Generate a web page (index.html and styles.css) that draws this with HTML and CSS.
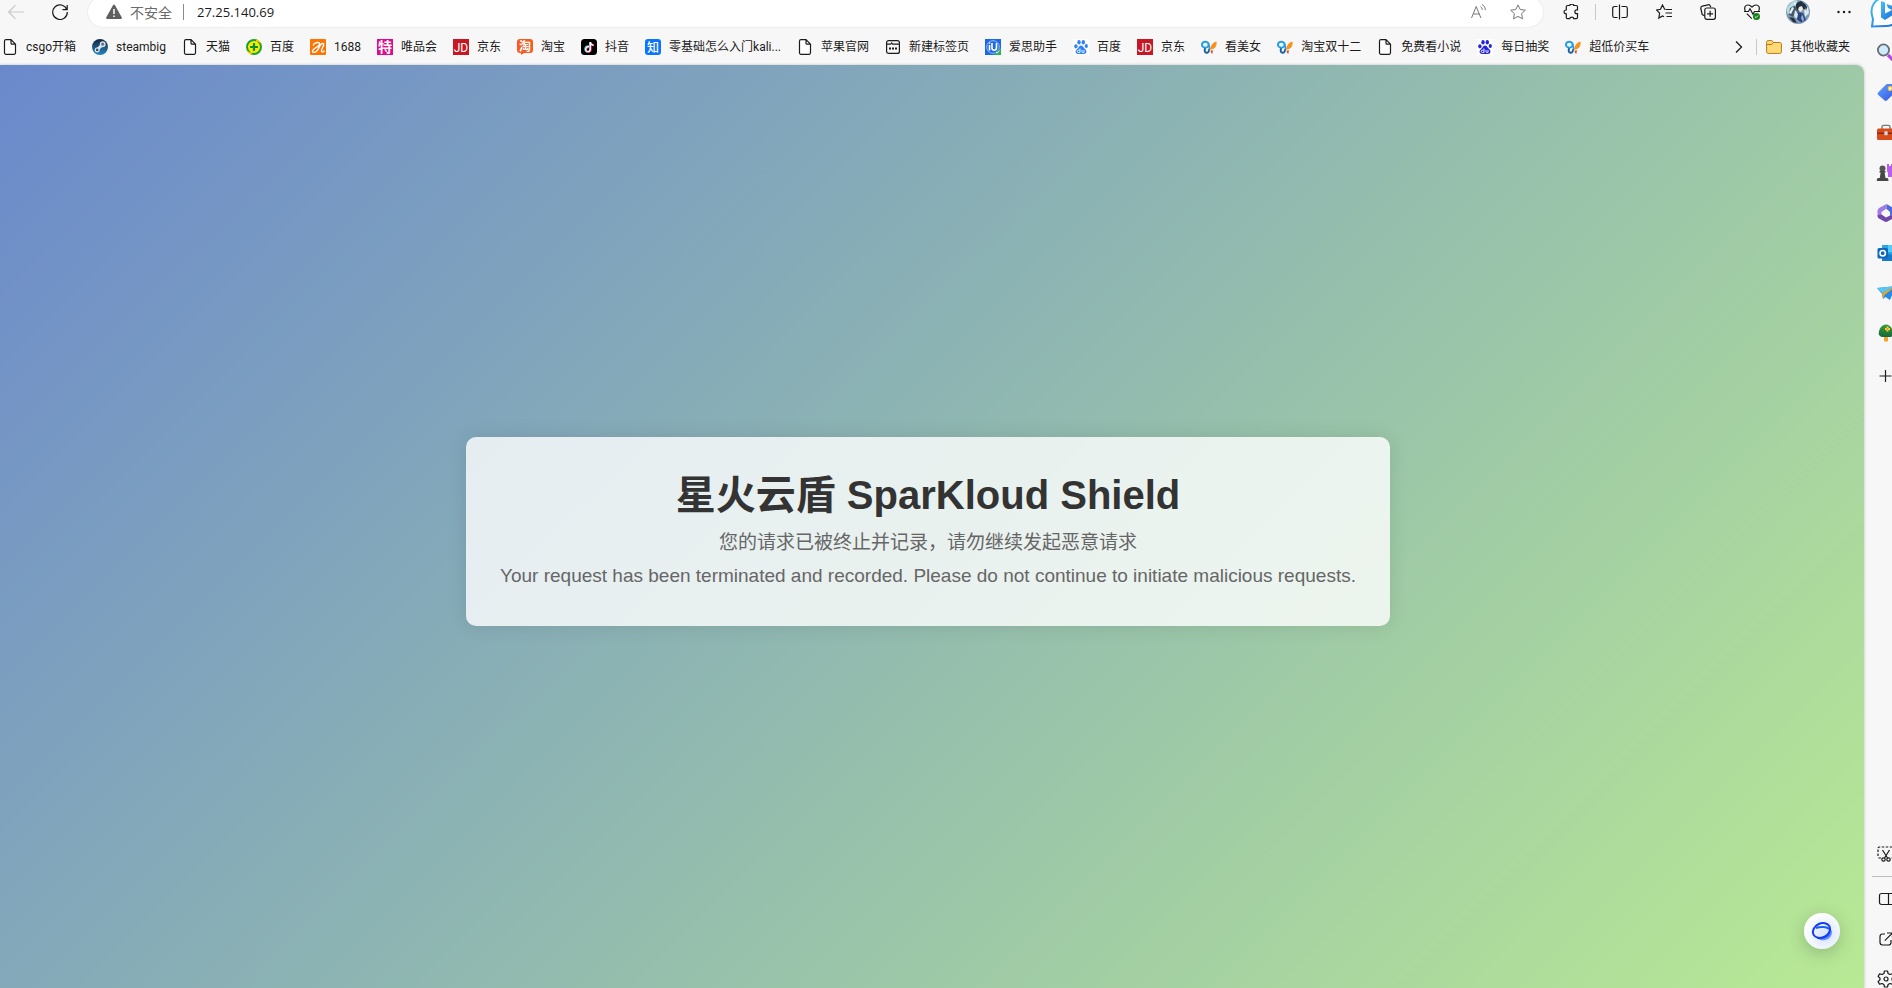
FILE: index.html
```html
<!DOCTYPE html>
<html lang="zh-CN">
<head>
<meta charset="utf-8">
<title>星火云盾 SparKloud Shield</title>
<link rel="stylesheet" href="styles.css">
</head>
<body>
<svg class="defs" aria-hidden="true">
  <defs>
    <linearGradient id="steam" x1="0" y1="0" x2="0" y2="1"><stop offset="0" stop-color="#152440"/><stop offset="1" stop-color="#2487bd"/></linearGradient>
    <linearGradient id="bing" x1="0" y1="0" x2="1" y2="1"><stop offset="0" stop-color="#45c4f3"/><stop offset="1" stop-color="#1862d8"/></linearGradient>
    <linearGradient id="tag" x1="0" y1="0" x2="1" y2="1"><stop offset="0" stop-color="#62a4ff"/><stop offset="1" stop-color="#3453e0"/></linearGradient>
    <linearGradient id="tree" x1="0" y1="0" x2="0" y2="1"><stop offset="0" stop-color="#3c9a3e"/><stop offset="1" stop-color="#126b37"/></linearGradient>
    <radialGradient id="orb" cx="0.6" cy="0.6" r="0.6"><stop offset="0" stop-color="#d5e2ff"/><stop offset="1" stop-color="#ffffff"/></radialGradient>
    <symbol id="page" viewBox="0 0 16 16"><path d="M4 .7h5l4.500 4.500v8.600a1.500 1.500 0 0 1-1.500 1.500H4a1.500 1.500 0 0 1-1.500-1.500V2.200A1.500 1.500 0 0 1 4 .7ZM9 .7v3.500a1 1 0 0 0 1 1h3.500" fill="#fff" stroke="#1b1b1b" stroke-width="1.200"/></symbol>
    <symbol id="jd" viewBox="0 0 16 16"><path d="M0 0h16v16H0z" fill="#c81623"/><text x="8" y="12.500" text-anchor="middle" font-size="12" fill="#fff">JD</text></symbol>
    <symbol id="paw" viewBox="0 0 16 16"><path d="M0 0h16v16H0z" fill="#fff"/><ellipse cx="2.900" cy="7.300" rx="1.700" ry="2.100"/><ellipse cx="6" cy="3.300" rx="1.700" ry="2.300"/><ellipse cx="10.300" cy="3.300" rx="1.700" ry="2.300"/><ellipse cx="13.300" cy="7" rx="1.600" ry="2"/><path d="M8 6.500c1.800 0 2.300 1.700 3.500 2.900 1.600 1.500 2.400 2.600 1.800 4.200-.7 1.800-2.500 1.500-5.300 1.500s-4.700.2-5.300-1.600c-.5-1.700.6-2.600 2-4C5.900 8.300 6.300 6.500 8 6.500Z"/><path d="M7 9.500v4H5.500c-1.700 0-1.700-2.300 0-2.300H7M9 11v1.700c0 .8.600.8 2 .8V11" fill="none" stroke="#fff" stroke-width=".9"/></symbol>
    <symbol id="fly" viewBox="0 0 16 16"><ellipse cx="4.300" cy="5.700" rx="3.400" ry="3" fill="#e9f7ff" stroke="#2c9fdf" stroke-width="2"/><path d="M7.500 5c.8 1.800 1 4 .8 6" fill="none" stroke="#239bdd" stroke-width="1.600"/><path d="M4.500 9.300c-1.600 1.500-.8 4.300.9 4.500 1.700.1 2.500-1.200 2.600-3.300" fill="none" stroke="#165f9d" stroke-width="1.900"/><path d="M9 11c.1-4 3-7.800 6.300-8.600.9 3-.1 6-2.700 7.400-1.300.6-2.500.5-3.600 1.200Z" fill="#f7931d"/><path d="m9.700 11.500 2.300-.2-.6 3.500c-1.600-.8-1.900-1.500-1.700-3.300Z" fill="#e44e37"/></symbol>
  </defs>
</svg>
<div class="browser">
  <div class="window">
    <header class="toolbar">
      <button class="tool faded" aria-label="返回"><svg viewBox="0 0 16 16"><path d="M16 8H.7M7.500 1.200.7 8l6.800 6.800"/></svg></button>
      <button class="tool" aria-label="刷新"><svg viewBox="0 0 16 16"><path d="M14.800 5.500A7.300 7.300 0 1 0 15.300 8M15.200 1v4.700h-4.700"/></svg></button>
      <form class="address">
        <button class="security" type="button"><svg viewBox="0 0 16 16"><path d="M7 1.200a1.200 1.200 0 0 1 2 0l6.700 12a1.200 1.200 0 0 1-1 1.800H1.300a1.200 1.200 0 0 1-1-1.800Z" fill="#5f5f5f"/><path d="M8 5v5M8 11.500v1.500" stroke="#fff" stroke-width="1.500"/></svg>不安全</button>
        <input class="url" type="text" aria-label="地址" value="27.25.140.69">
        <button class="inner" type="button" aria-label="朗读此页内容"><svg viewBox="0 0 16 16"><path d="m1.500 14 4.700-11.500L10.900 14M3.200 10h6M10.500 2.500c1.100.8 1.600 1.800 1.700 3.300M12 .5c2.200 1.100 3.300 3 3.400 5.600"/></svg></button>
        <button class="inner" type="button" aria-label="收藏"><svg viewBox="0 0 16 16"><path d="m8 .9 2.200 4.600 5.100.7-3.700 3.500.9 5.100L8 12.400l-4.500 2.400.9-5.100L.7 6.200l5.100-.7Z"/></svg></button>
      </form>
      <button class="tool" aria-label="扩展"><svg viewBox="0 0 16 16"><path d="M4.500 1.500h2.300C6.800-.3 10.700-.3 10.700 1.500h2.600c.7 0 1.200.5 1.200 1.200v3.100h-.7c-2.600 0-2.600 3.900 0 3.900h.7v3.800c0 .7-.5 1.200-1.200 1.200h-2.600c0-2-3.900-2-3.900 0H4.500c-.7 0-1.200-.5-1.200-1.200V9.900C.3 9.900.3 6 3.300 6V2.700c0-.7.500-1.200 1.200-1.200Z"/></svg></button>
      <span class="rule"></span>
      <button class="tool" aria-label="分屏"><svg viewBox="0 0 16 16"><path d="M5.500 2.500h-3C1.400 2.500.7 3.200.7 4.300v7.400c0 1.100.7 1.800 1.800 1.800h3M9.500 2.500h4c1.100 0 1.800.7 1.800 1.800v7.400c0 1.100-.7 1.800-1.800 1.800h-4M7.500 .5v15"/></svg></button>
      <button class="tool" aria-label="收藏夹"><svg viewBox="0 0 16 16"><path d="M9 5.500 8.500 5 6.500 1 4.500 5.300.6 6l3 3.100-.8 5 3.700-2.200 1.500.8M9.500 5.500H16M9.500 9H16M10.500 12.500H16"/></svg></button>
      <button class="tool" aria-label="集锦"><svg viewBox="0 0 16 16"><path d="M4.500 11.800 2.200 10.500 .8 4.500C.5 3 1 2.500 2.300 2.100L8 .8c1.300-.3 2 .1 2.400 1.500l.3.900"/><rect x="4.800" y="4" width="10.600" height="11.300" rx="2"/><path d="M10.100 6.800v6M7.100 9.800h6"/></svg></button>
      <button class="tool" aria-label="浏览器概要"><svg viewBox="0 0 16 16"><path d="M1.300 7C-.3 3 1.500 1 4 1c1.900 0 3 1 4 2 1-1 2.100-2 4-2 2.500 0 4.300 2 2.700 6M2.800 9.600l5 5M0 7.500h4.500L6 4.800l3 5.400 1.500-2.700H16"/><circle cx="12.500" cy="12.500" r="3.500" fill="#128218" stroke="none"/><path d="m10.900 12.600 1.100 1.100 2.100-2.200" stroke="#fff" stroke-width=".9"/></svg></button>
      <button class="tool profile" aria-label="个人资料"><svg class="avatar" viewBox="0 0 24 24"><circle cx="12" cy="12" r="12" fill="#7d9bb2"/><path d="M1.500 7 6 2l5-2 1 4-5 6-5 4-1.500-3Z" fill="#b9dce4"/><path d="m10 3 5-2 5 4-1 5-3-2-4 4-2-4Z" fill="#22303f"/><path d="m4 8 5-3 2 5-4 7-4-2Z" fill="#46596b"/><path d="m6 7 2 1-3 6-2-1ZM9 2l2 1-4 4Z" fill="#e6f3f6"/><path d="m13 7 3-1 1 3-2 3-3-2Z" fill="#f0e5df"/><path d="m11 12 6 1 3 7-5 2.500-5-4Z" fill="#2c4482"/><path d="m9 10 3 4-1 5-3-3ZM18 10l4-3 1 6-4 4Z" fill="#dce9f0"/><path d="m3 17 5 1 3 5-4-1ZM14 15l2 4 1-4ZM19 5l2 2-1 4Z" fill="#26323f"/><path d="m16 14 2 5-1 3-2-4Z" fill="#8fb5d8"/></svg></button>
      <button class="tool" aria-label="设置及其他"><svg viewBox="0 0 16 16"><g fill="#1b1b1b" stroke="none"><circle cx="2.500" cy="8" r="1.200"/><circle cx="8" cy="8" r="1.200"/><circle cx="13.500" cy="8" r="1.200"/></g></svg></button>
    </header>
    <nav class="bookmarks" aria-label="收藏夹栏">
      <a href="#"><svg><use href="#page"/></svg>csgo开箱</a>
      <a href="#"><svg viewBox="0 0 16 16"><circle cx="8" cy="8" r="8" fill="url(#steam)"/><path d="m5.500 10.500 5-5" stroke="#dfe6ee" stroke-width="3"/><circle cx="10.700" cy="5.200" r="2.300" fill="#607896" stroke="#dfe6ee" stroke-width="1.300"/><circle cx="5.200" cy="10.900" r="1.900" fill="#315575" stroke="#dfe6ee" stroke-width="1.200"/></svg>steambig</a>
      <a href="#"><svg><use href="#page"/></svg>天猫</a>
      <a href="#"><svg viewBox="0 0 16 16"><circle cx="8" cy="8" r="7" fill="#ffe900" stroke="#12a23b" stroke-width="2"/><path d="M0 7c0 5 3 7 7 6l-2 2.500C2 14.500 0 11.500 0 8ZM16 9c0-5-3-7-7-6l2-2.500c3 1 5 4 5 7.500Z" fill="#ffd500"/><path d="M8 4v8M4 8h8" stroke="#0a9136" stroke-width="2.200"/></svg>百度</a>
      <a href="#"><svg viewBox="0 0 16 16"><rect width="16" height="16" rx="1" fill="#ff7300"/><path d="M3 6.500C4.500 3 10.500 2.500 9.500 5.500 8.500 8.500 3 9 2.500 12c-.3 2.500 4 1.500 5.500-1.500C9.500 7.500 10.500 4 13 4.500c2.500.8-2.500 6-1.500 8 .6 1 2.300.2 3-.7" fill="none" stroke="#fff" stroke-width="1.400"/></svg>1688</a>
      <a href="#"><svg class="label" viewBox="0 0 16 16"><path d="M0 0h16v16H0z" fill="#df0b8e"/><text x="8" y="13" text-anchor="middle" font-size="14" font-weight="700" fill="#fff">特</text></svg>唯品会</a>
      <a href="#"><svg><use href="#jd"/></svg>京东</a>
      <a href="#"><svg class="label" viewBox="0 0 16 16"><path d="M3 0h10a3 3 0 0 1 3 3v8a3 3 0 0 1-3 3H7l-3 2v-2H3a3 3 0 0 1-3-3V3a3 3 0 0 1 3-3Z" fill="#f65b20"/><text x="8" y="11.500" text-anchor="middle" font-size="12" font-weight="700" fill="#fff">淘</text></svg>淘宝</a>
      <a href="#"><svg viewBox="0 0 16 16"><rect width="16" height="16" rx="3.500"/><g fill="none" stroke-width="1.800"><path d="M7.700 7.200c-4.500-.4-4.600 5.700-1 5.700 1.400 0 2.200-1 2.200-2.400V3" stroke="#20dad6"/><path d="M8.300 8c-4-.2-4 5-.9 5 1.400 0 2.400-1 2.400-2.400V3.200c.2 2 1.400 3.100 3.200 3.300" stroke="#f7265a"/><path d="M8 7.600c-4-.4-4.300 4.900-1.200 5 1.400 0 2.500-1 2.500-2.400V3c.2 2 1.400 3 3.200 3.200" stroke="#fff" stroke-width="1.300"/></g></svg>抖音</a>
      <a href="#"><svg class="label" viewBox="0 0 16 16"><rect width="16" height="16" rx="3" fill="#0874ff"/><text x="8" y="12.500" text-anchor="middle" font-size="12" font-weight="500" fill="#fff">知</text></svg>零基础怎么入门kali...</a>
      <a href="#"><svg><use href="#page"/></svg>苹果官网</a>
      <a href="#"><svg viewBox="0 0 16 16"><g fill="none" stroke="#1b1b1b" stroke-width="1.200"><rect x="1.600" y="1.600" width="12.800" height="12.800" rx="2"/><path d="M1.600 5.200h4L7.200 3.500M7 5.200h7"/><path d="M4 9.500h2M7 9.500h2M10 9.500h2" stroke-width="1.800"/></g></svg>新建标签页</a>
      <a href="#"><svg viewBox="0 0 16 16"><path d="M0 0h16v16H0z" fill="#1f68e5"/><circle cx="8" cy="8" r="6.300" fill="none" stroke="#b6d0ff" stroke-width=".8"/><path d="M4.500 6v5.500M4.500 3.500v1.200M7 4v5c0 3 4.500 3 4.500 0V4" fill="none" stroke="#fff" stroke-width="1.600"/><path d="M16 9v7H8.500Z" fill="#2fac61"/><path d="m11 13 1 1.200 2.500-2.600" fill="none" stroke="#d5ffe3"/></svg>爱思助手</a>
      <a href="#"><svg class="paw-light"><use href="#paw"/></svg>百度</a>
      <a href="#"><svg><use href="#jd"/></svg>京东</a>
      <a href="#"><svg><use href="#fly"/></svg>看美女</a>
      <a href="#"><svg><use href="#fly"/></svg>淘宝双十二</a>
      <a href="#"><svg><use href="#page"/></svg>免费看小说</a>
      <a href="#"><svg class="paw-dark"><use href="#paw"/></svg>每日抽奖</a>
      <a href="#"><svg><use href="#fly"/></svg>超低价买车</a>
      <button class="more" aria-label="更多收藏"><svg viewBox="0 0 16 16"><path d="m6 2.500 5.500 5.500L6 13.500" fill="none" stroke="#1b1b1b" stroke-width="1.300"/></svg></button>
      <span class="rule"></span>
      <a href="#"><svg viewBox="0 0 16 16"><path d="M.6 4.500V3.200c0-1 .6-1.600 1.600-1.600h3.600l2 1.900h6c1 0 1.600.6 1.600 1.500v7.800c0 1-.6 1.600-1.600 1.600H2.200c-1 0-1.600-.6-1.600-1.600Z" fill="#ffd978" stroke="#b27b12"/><path d="M.6 5.500h5L7.800 3.500" fill="none" stroke="#b27b12"/></svg>其他收藏夹</a>
    </nav>
    <main class="content">
      <section class="card">
        <h1>星火云盾 SparKloud Shield</h1>
        <p>您的请求已被终止并记录，请勿继续发起恶意请求</p>
        <p>Your request has been terminated and recorded. Please do not continue to initiate malicious requests.</p>
      </section>
      <button class="assistant" aria-label="助手"><svg viewBox="0 0 36 36"><circle cx="18" cy="18" r="18" fill="url(#orb)"/><g fill="none" stroke-width="2"><path d="M12 15c5-1.800 11.500-1 13.500 1.200 2.300 3-.3 7.300-4.700 8.500-3.500 1-5.800.7-7.600-.1" stroke="#1b5cff"/><path d="M26.800 18c.8 4-1.800 7.300-5.800 8-2 .4-4 .3-5.500-.1" stroke="#5f8dff"/><ellipse cx="17.500" cy="17.500" rx="9" ry="7" transform="rotate(-27 17.500 17.500)" stroke="#143cf5"/></g></svg></button>
    </main>
  </div>
  <aside class="sidebar" aria-label="边栏">
    <button class="bing" aria-label="必应"><svg viewBox="0 0 32 32"><path d="M2 30.500 3 23C-1.500 11 5 1.500 16 1.500S31 9 31 16 25 30 16 30Z" fill="#fff" stroke="url(#bing)" stroke-width="2"/><path d="m11 5 4 1.500v11l7-3.500-4-2-1.500-4L26 11v6l-11 7-4-2.500Z" fill="url(#bing)"/></svg></button>
    <button aria-label="搜索"><svg viewBox="0 0 20 20"><path d="m12 12 6 6" stroke="#b643eb" stroke-width="3.200"/><circle cx="7.500" cy="7" r="5.600" fill="#cfeafa" stroke="#686d75" stroke-width="1.800"/></svg></button>
    <button aria-label="购物"><svg viewBox="0 0 20 20"><path d="m2.300 9.300 7-7c1-1 1.500-1.200 2.700-1.200h5.500c1 0 1.500.5 1.500 1.500V8c0 1.200-.3 1.700-1.200 2.600l-6.500 6.500c-1.200 1.200-2 1.200-3.200 0l-5.800-5c-.9-.8-.9-1.900 0-2.800Z" fill="url(#tag)"/><circle cx="14.200" cy="5.500" r="1.900" fill="#fff" stroke="#ffc629" stroke-width="1.200"/></svg></button>
    <button aria-label="工具"><svg viewBox="0 0 20 20"><path d="M6 6V4c0-1 .6-1.600 1.600-1.600h4.800c1 0 1.600.6 1.600 1.600v2" fill="none" stroke="#77777c" stroke-width="1.400"/><rect x="1" y="5.500" width="18" height="11.500" rx="1.500" fill="#d84b1a"/><path d="M1 9.500h18v1.500H1z" fill="#8d2b12"/><rect x="8.300" y="8.300" width="3.400" height="4" rx=".8" fill="#d4d8df"/></svg></button>
    <button aria-label="游戏"><svg viewBox="0 0 20 20"><path d="M11 1h2v2h2V1h2v2h3v5l-1.500 2v4H12v-4l-1-2Z" fill="#b95df2"/><circle cx="6.500" cy="5.500" r="3" fill="#555"/><path d="M3.500 8h6v1.600H8.600l.9 5.400h1.700c.8 0 1.300 1.300 1.300 3H.8c0-1.700.5-3 1.400-3h1.600l.8-5.400H3.500Z" fill="#484848"/></svg></button>
    <button aria-label="Microsoft 365"><svg viewBox="0 0 20 20"><path d="M10.500 1 4 4.500C2.400 5.400 1.500 6.500 1.500 8v5l4 2V9l5-3Z" fill="#a17be4"/><path d="m10.500 1 7 4c1 .6 1.500 1.500 1.500 2.500v5l-5 .5V9l-3.500-3Z" fill="#496bdd"/><path d="m1.500 12.500 4-1 4.500 3 4-2 5 .5-1.500 2-6 3.600c-1 .6-2 .6-3 0L3 15.500c-1-.6-1.500-1.500-1.500-3Z" fill="#7045ae"/><path d="M7 8.200 10 6l3 2.200v3.300L10 13.500l-3-2Z" fill="#f7f7f7"/></svg></button>
    <button aria-label="Outlook"><svg viewBox="0 0 20 20"><path d="M6 2h12a2 2 0 0 1 2 2v12a2 2 0 0 1-2 2H6Z" fill="#2aa6e8"/><path d="M12 2h8v7h-8Z" fill="#55c9f8"/><path d="m6 9 14 4v5H6Z" fill="#1679cc"/><rect x="1.500" y="5" width="10.500" height="10.500" rx="1.500" fill="#0f67b8"/><circle cx="6.700" cy="10.200" r="2.700" fill="none" stroke="#fff" stroke-width="1.600"/></svg></button>
    <button aria-label="Drop"><svg viewBox="0 0 20 20"><path d="M1 5 20 3l-6 14-4.500-3L7 16l-1-5Z" fill="#2489e8"/><path d="m1 5 19-2L6 10Z" fill="#54c7f5"/><path d="m6 10 14-7L8.500 12 7 16Z" fill="#e8a52b"/></svg></button>
    <button aria-label="植树"><svg viewBox="0 0 20 20"><path d="M8 13h4v4.500c0 .8-.5 1-1 1H9c-.5 0-1-.2-1-1Z" fill="#f5a326"/><path d="M10 1.500c4 0 6.800 4 7.300 8.500.2 2.500-1.800 4-3.800 4h-7c-2 0-4-1.500-3.800-4C3.200 5.500 6 1.500 10 1.500Z" fill="url(#tree)"/><path d="M11.500 3.500v5M9 6h5" stroke="#ffd43b" stroke-width="2"/><circle cx="11.500" cy="6" r="1" fill="#ef871d"/></svg></button>
    <button class="line" aria-label="添加"><svg viewBox="0 0 20 20"><path d="M9.500 4v12M3.500 10h12"/></svg></button>
    <div class="bottom">
      <button class="line" aria-label="截图"><svg viewBox="0 0 20 20"><path d="M5 14H3.500C2.600 14 2 13.400 2 12.500V4.500C2 3.600 2.600 3 3.500 3h13c.9 0 1.500.6 1.500 1.500v8c0 .9-.6 1.500-1.500 1.500H15" stroke-dasharray="2.500 1.500"/><path d="m6.500 6 5 8M13.500 6l-5 8"/><circle cx="7.500" cy="15.500" r="1.700"/><circle cx="12.500" cy="15.500" r="1.700"/></svg></button>
      <hr>
      <button class="line" aria-label="侧栏"><svg viewBox="0 0 20 20"><rect x="3.500" y="4.500" width="15" height="11" rx="2"/><path d="M12.500 4.500v11"/></svg></button>
      <button class="line" aria-label="外部打开"><svg viewBox="0 0 20 20"><path d="M9 5H6.500C5 5 4 6 4 7.500v5.800C4 15 5 16 6.500 16h6c1.500 0 2.500-1 2.500-2.500V11M11 4h5.500v5.500M16.300 4.200l-7.500 7.500"/></svg></button>
      <button class="line" aria-label="设置"><svg viewBox="0 0 20 20"><circle cx="10" cy="10" r="2"/><path d="M8.500 2h3l.6 2.500 1.800 1 2.500-.7 1.500 2.600L16 9.200v1.600l1.900 1.800-1.500 2.600-2.500-.7-1.800 1-.6 2.500h-3l-.6-2.500-1.800-1-2.500.7-1.500-2.600L4 10.800V9.200L2.100 7.400l1.500-2.600 2.500.7 1.800-1Z" stroke-linejoin="round"/></svg></button>
    </div>
  </aside>
</div>
</body>
</html>
```
FILE: styles.css
```css
* { box-sizing: border-box; }

body {
  margin: 0;
  background: #f7f7f7;
  color: #1b1b1b;
  font-family: "Noto Sans CJK SC", "Noto Sans", sans-serif;
  font-size: 12px;
}

button {
  border: 0;
  padding: 0;
  background: none;
  font: inherit;
  color: inherit;
}

svg { display: block; flex: none; }

.defs { position: absolute; width: 0; height: 0; }

.browser {
  display: grid;
  grid-template-columns: minmax(0, 1fr) 28px;
  height: 100vh;
  overflow: hidden;
}

.window { display: flex; flex-direction: column; min-width: 0; }

/* Toolbar */
.toolbar {
  display: flex;
  align-items: center;
  gap: 12px;
  height: 32px;
  margin-top: -4px;
  padding-right: 4px;
}

.tool {
  display: flex;
  justify-content: center;
  flex: none;
  width: 32px;
}

.tool svg,
.inner svg {
  width: 16px;
  height: 16px;
  fill: none;
  stroke: #1b1b1b;
  stroke-width: 1.2;
}

.faded svg { stroke: #c9c9c9; }
.profile { width: 36px; }
.tool .avatar { width: 24px; height: 24px; stroke: none; }

.rule { flex: none; width: 1px; height: 16px; margin: 0 -4px; background: #c8c8c8; }

.address {
  display: flex;
  align-items: center;
  flex: 1;
  gap: 24px;
  min-width: 0;
  height: 30px;
  padding: 0 17px 0 18px;
  border-radius: 16px;
  background: #fff;
  box-shadow: 0 0 2px rgba(0, 0, 0, 0.12);
}

.security {
  display: flex;
  align-items: center;
  gap: 8px;
  padding-right: 11px;
  font-size: 14px;
  line-height: 16px;
  color: #6b6b6b;
}

.security svg { width: 16px; height: 16px; }

.url {
  flex: 1;
  min-width: 0;
  height: 16px;
  margin-left: -24px;
  padding: 0 0 0 13px;
  border: 0;
  border-left: 1px solid #8c8c8c;
  outline: 0;
  font-family: "Open Sans", "Noto Sans", sans-serif;
  font-size: 13px;
  color: #1b1b1b;
}

.inner svg { stroke: #767676; stroke-width: 1; }

/* Bookmarks */
.bookmarks {
  display: flex;
  align-items: center;
  gap: 16px;
  height: 37px;
  padding: 0 14px 0 2px;
  font-family: Roboto, "Noto Sans CJK SC", sans-serif;
  white-space: nowrap;
}

.bookmarks a {
  display: flex;
  align-items: center;
  gap: 8px;
  line-height: 18px;
  color: #1b1b1b;
  text-decoration: none;
}

.bookmarks svg { width: 16px; height: 16px; }
.bookmarks .label { overflow: visible; }
.paw-light { fill: #2f83f5; }
.paw-dark { fill: #2424dc; }
.more { margin-left: auto; }
.bookmarks .rule { margin: 0 -7px 0 -6px; }

/* Page */
.content {
  position: relative;
  display: flex;
  align-items: center;
  justify-content: center;
  flex: 1;
  padding: 10px 8px 0 0;
  border-top-right-radius: 8px;
  background: linear-gradient(135deg, #6a89cc, #b8e994);
  box-shadow: 0 0 3px rgba(0, 0, 0, 0.25);
  font-family: "Liberation Sans", "Noto Sans CJK SC", sans-serif;
}

.card {
  padding: 30px 34px 34px;
  border-radius: 10px;
  background: rgba(255, 255, 255, 0.8);
  box-shadow: 0 0 20px rgba(0, 0, 0, 0.1);
  text-align: center;
}

.card h1 {
  margin: 0 0 3px;
  font-size: 40px;
  line-height: 56px;
  color: #333;
}

.card p {
  margin: 0;
  font-size: 19px;
  line-height: 33px;
  color: #666;
}

.assistant {
  position: absolute;
  right: 24px;
  bottom: 39px;
  border-radius: 50%;
  box-shadow: 0 4px 16px rgba(60, 90, 60, 0.3);
}

.assistant svg { width: 36px; height: 36px; }

/* Sidebar */
.sidebar {
  display: flex;
  flex-direction: column;
  gap: 20px;
  padding-left: 12px;
  overflow: hidden;
}

.sidebar svg { width: 20px; height: 20px; }
.sidebar .bing { margin: -4px 0 -5px -6px; }
.sidebar .bing svg { width: 32px; height: 32px; }
.line svg { fill: none; stroke: #1b1b1b; stroke-width: 1.2; }
.sidebar > .line { margin-top: 3px; }

.bottom {
  display: flex;
  flex-direction: column;
  gap: 20px;
  margin-top: auto;
  margin-bottom: -1px;
}

.bottom hr {
  width: 100%;
  margin: -8px 0 -8px -4px;
  padding-right: 4px;
  border: 0;
  border-top: 1px solid #bdbdbd;
  box-sizing: content-box;
}
```
